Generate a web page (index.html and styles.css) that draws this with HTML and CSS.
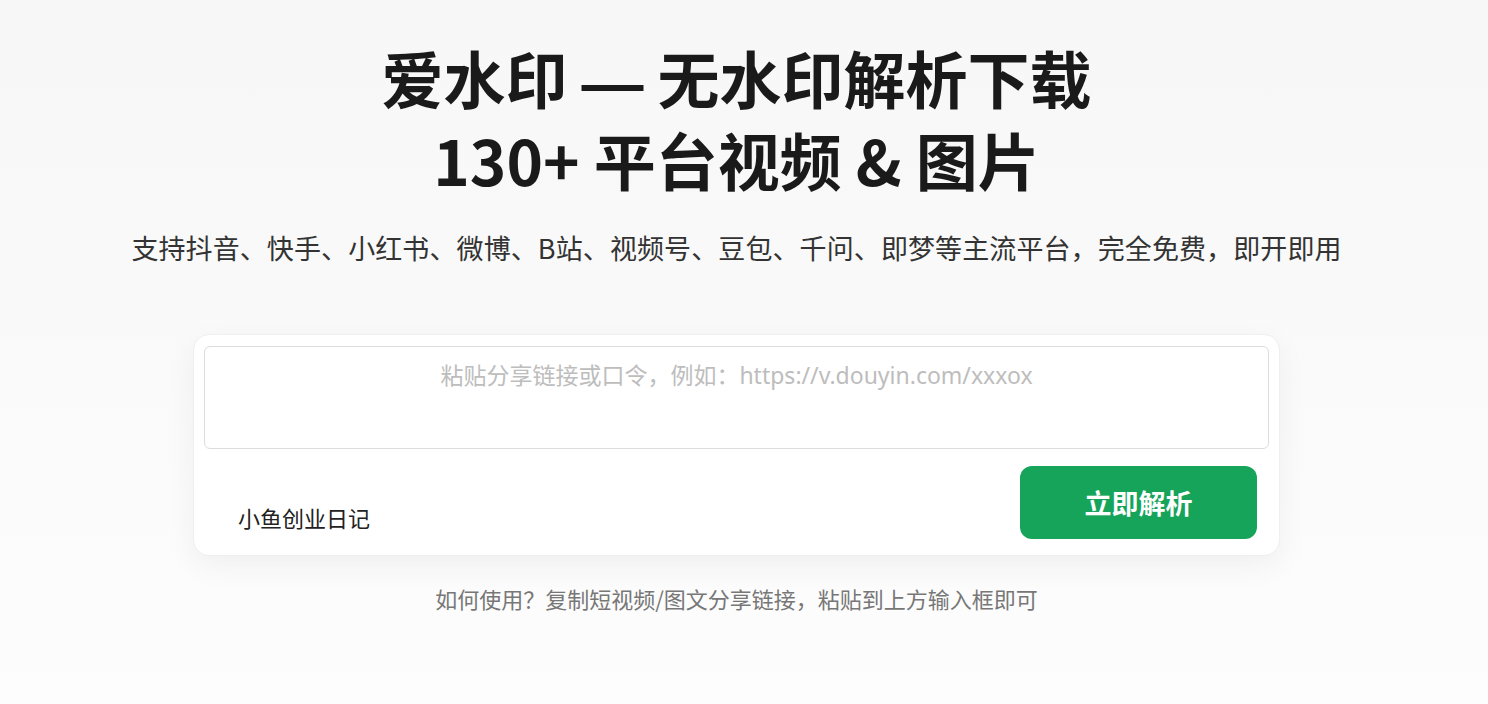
FILE: index.html
```html
<!DOCTYPE html>
<html lang="zh-CN">
<head>
<meta charset="utf-8">
<title>爱水印 — 无水印解析下载</title>
<link rel="stylesheet" href="styles.css">
</head>
<body>
<main class="page">
  <h1 class="title">爱水印 <span class="dash">—</span> 无水印解析下载<br>130+ 平台视频 &amp; 图片</h1>
  <p class="subtitle">支持抖音、快手、小红书、微博、B站、视频号、豆包、千问、即梦等主流平台，完全免费，即开即用</p>
  <section class="card">
    <textarea class="input" placeholder="粘贴分享链接或口令，例如：https://v.douyin.com/xxxox"></textarea>
    <div class="actions">
      <span class="brand">小鱼创业日记</span>
      <button class="btn" type="button">立即解析</button>
    </div>
  </section>
  <p class="hint">如何使用？复制短视频/图文分享链接，粘贴到上方输入框即可</p>
</main>
</body>
</html>
```
FILE: styles.css
```css
html, body {
  margin: 0;
  height: 100%;
}
body {
  background: linear-gradient(180deg, #f6f7f6 0%, #fafafa 55%, #fdfdfd 100%);
  font-family: "Noto Sans", "Noto Sans CJK SC", sans-serif;
  color: #222;
  padding-right: 15px;
  box-sizing: border-box;
}
.page {
  display: flex;
  flex-direction: column;
  align-items: center;
  padding-top: 36px;
}
.title {
  margin: 0;
  font-family: "Noto Sans CJK SC", sans-serif;
  font-weight: 700;
  font-size: 62px;
  line-height: 82px;
  color: #1a1a1a;
  text-align: center;
}
.dash {
  font-family: "Liberation Sans", sans-serif;
  font-weight: 700;
  line-height: 1;
}
.subtitle {
  margin: 28px 0 0;
  font-family: "Noto Sans CJK SC", sans-serif;
  font-size: 27px;
  letter-spacing: 0.1px;
  line-height: 40px;
  color: #333;
  text-align: center;
}
.card {
  margin-top: 66px;
  width: 1087px;
  box-sizing: border-box;
  background: #fff;
  border: 1px solid #efefef;
  border-radius: 16px;
  box-shadow: 0 10px 30px rgba(0, 0, 0, 0.05);
  padding: 11px 10px 16px;
  display: flex;
  flex-direction: column;
}
.input {
  display: block;
  width: 100%;
  height: 103px;
  box-sizing: border-box;
  border: 1px solid #dddddd;
  border-radius: 6px;
  background: #fff;
  padding: 12px 16px;
  resize: none;
  font-family: "Noto Sans", "Noto Sans CJK SC", sans-serif;
  font-size: 23px;
  line-height: 32px;
  text-align: center;
  color: #333;
  outline: none;
}
.input::placeholder {
  color: #bdbdbd;
}
.actions {
  margin-top: 17px;
  display: flex;
  justify-content: space-between;
  align-items: flex-end;
  padding: 0 12px 0 34px;
}
.brand {
  font-family: "Noto Sans CJK SC", sans-serif;
  font-size: 22px;
  line-height: 30px;
  color: #222;
  padding-bottom: 7px;
}
.btn {
  width: 237px;
  height: 73px;
  border: none;
  border-radius: 12px;
  background: #16a35a;
  color: #fff;
  font-family: "Noto Sans CJK SC", sans-serif;
  font-weight: 700;
  font-size: 27px;
  cursor: pointer;
}
.hint {
  margin: 26px 0 0;
  font-family: "Noto Sans CJK SC", sans-serif;
  font-size: 22px;
  line-height: 32px;
  color: #777;
  text-align: center;
}
```
